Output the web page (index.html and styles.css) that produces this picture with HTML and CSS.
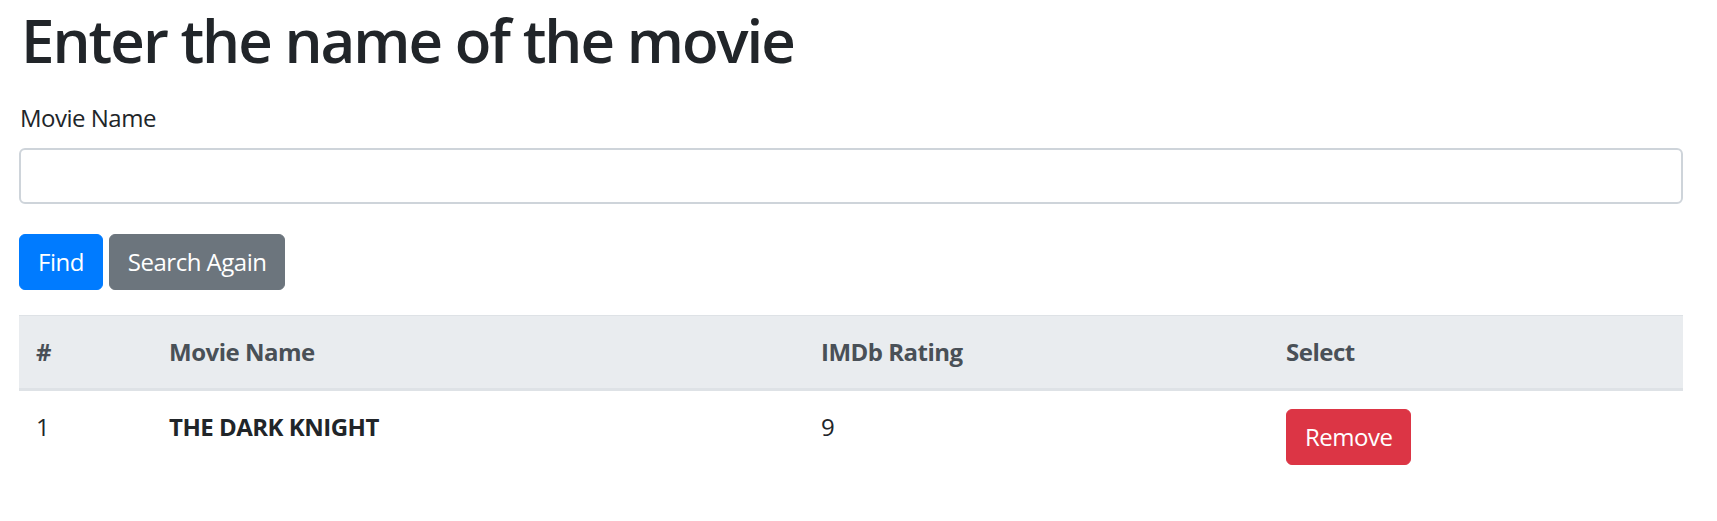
FILE: index.html
```html
<!DOCTYPE html>
<html lang="en">
<head>
<meta charset="utf-8">
<title>Movie Search</title>
<link rel="stylesheet" href="styles.css">
</head>
<body>
<div class="container">
  <h1 class="title">Enter the name of the movie</h1>
  <div class="form-group">
    <label class="label" for="movie">Movie Name</label>
    <input class="form-control" id="movie" type="text">
  </div>
  <div class="actions">
    <button class="btn btn-primary">Find</button>
    <button class="btn btn-secondary">Search Again</button>
  </div>
  <table class="table">
    <thead>
      <tr>
        <th class="col-num">#</th>
        <th class="col-name">Movie Name</th>
        <th class="col-rating">IMDb Rating</th>
        <th class="col-select">Select</th>
      </tr>
    </thead>
    <tbody>
      <tr>
        <td>1</td>
        <td class="movie-title">THE DARK KNIGHT</td>
        <td>9</td>
        <td><button class="btn btn-danger">Remove</button></td>
      </tr>
    </tbody>
  </table>
</div>
</body>
</html>
```

FILE: styles.css
```css
* { box-sizing: border-box; }

html, body {
  margin: 0;
  padding: 0;
  background: #fff;
}

body {
  font-family: "Open Sans", "Noto Sans", "Liberation Sans", sans-serif;
  font-size: 24px;
  line-height: 36px;
  letter-spacing: -0.5px;
  color: #212529;
}

.container {
  padding: 4px 34px 0 19px;
}

.title {
  margin: 0 0 24px 2px;
  font-size: 60px;
  line-height: 72px;
  font-weight: 600;
  letter-spacing: -2px;
  color: #212529;
}

.form-group {
  display: flex;
  flex-direction: column;
  gap: 12px;
}

.label {
  display: block;
  margin-left: 1px;
}

.form-control {
  display: block;
  width: 100%;
  height: 56px;
  padding: 9px 18px;
  font-family: inherit;
  font-size: 24px;
  color: #495057;
  background: #fff;
  border: 2px solid #ced4da;
  border-radius: 6px;
}

.actions {
  display: flex;
  gap: 6px;
  margin-top: 30px;
}

.btn {
  display: inline-block;
  height: 56px;
  padding: 0 18px;
  font-family: inherit;
  font-size: 24px;
  line-height: 36px;
  letter-spacing: -0.5px;
  color: #fff;
  border: 1.5px solid transparent;
  border-radius: 6px;
}

.btn-primary { background: #007bff; border-color: #007bff; }
.btn-secondary { background: #6c757d; border-color: #6c757d; }
.btn-danger { background: #dc3545; border-color: #dc3545; }

.table {
  width: 100%;
  margin-top: 25px;
  border-collapse: collapse;
  table-layout: fixed;
}

.table th,
.table td {
  padding: 18px 18px 18px 17px;
  text-align: left;
  vertical-align: top;
  border-top: 1.5px solid #dee2e6;
}

.table thead th {
  background: #e9ecef;
  color: #495057;
  font-weight: 700;
  border-bottom: 3px solid #dee2e6;
}

.col-num { width: 133px; }
.col-name { width: 652px; }
.col-rating { width: 465px; }

.movie-title { font-weight: 700; }
```
